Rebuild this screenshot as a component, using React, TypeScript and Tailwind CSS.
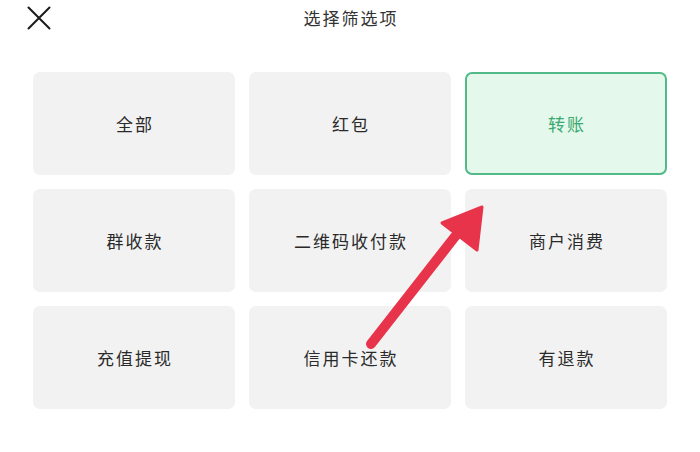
const options = ['全部', '红包', '转账', '群收款', '二维码收付款', '商户消费', '充值提现', '信用卡还款', '有退款']
const selected = '转账'

export default function App() {
  return (
    <div
      className="relative w-[700px] h-[452px] bg-white overflow-hidden"
      style={{ fontFamily: '"Noto Sans CJK SC", "Noto Sans", sans-serif' }}
    >
      <div className="relative h-[36px] flex items-center justify-center">
        <svg className="absolute left-[27px] top-[6px]" width="24" height="24" viewBox="0 0 24 24">
          <path d="M1.5 1.5 L22.5 22.5 M22.5 1.5 L1.5 22.5" stroke="#1a1a1a" strokeWidth="2" strokeLinecap="round" />
        </svg>
        <span className="text-[17px] text-[#333] tracking-[2px] pl-[2px]">选择筛选项</span>
      </div>

      <div className="grid grid-cols-3 gap-x-[14px] gap-y-[14px] px-[33px] pt-[36px]">
        {options.map((opt) => {
          const active = opt === selected
          return (
            <div
              key={opt}
              className={
                active
                  ? 'h-[103px] rounded-[7px] border-2 border-[#52b988] bg-[#e4f8ec] flex items-center justify-center text-[17px] text-[#3aa870]'
                  : 'h-[103px] rounded-[7px] bg-[#f2f2f2] flex items-center justify-center text-[17px] text-[#2a2a2a]'
              }
            >
              <span className="tracking-[2px] pl-[2px]">{opt}</span>
            </div>
          )
        })}
      </div>

      {/* annotation arrow */}
      <svg className="absolute left-0 top-0 pointer-events-none" width="700" height="452" viewBox="0 0 700 452">
        <line x1="371" y1="344" x2="457" y2="234" stroke="#e8344a" strokeWidth="10" strokeLinecap="round" />
        <polygon points="482,207 442,223 477,250" fill="#e8344a" stroke="#e8344a" strokeWidth="3" strokeLinejoin="round" />
      </svg>
    </div>
  )
}
